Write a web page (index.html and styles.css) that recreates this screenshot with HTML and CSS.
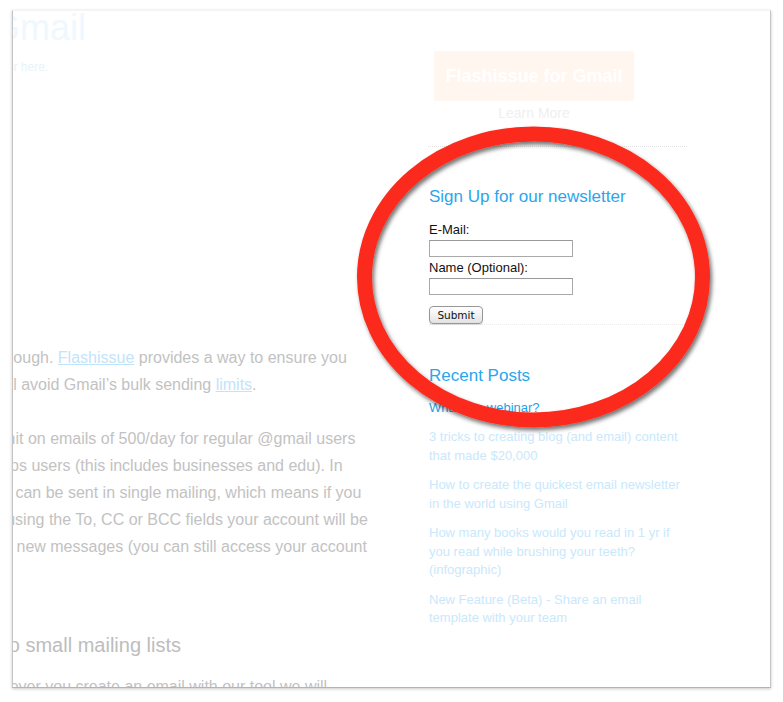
FILE: index.html
```html
<!DOCTYPE html>
<html lang="en">
<head>
<meta charset="utf-8">
<title>Flashissue for Gmail</title>
<link rel="stylesheet" href="styles.css">
</head>
<body>
<div class="frame">
  <main class="main">
    <h1 class="title">Gmail</h1>
    <p class="sub">newsletter here.</p>
    <div class="article">
      <div class="ln ln1">though. <a class="link" href="#">Flashissue</a> provides a way to ensure you</div>
      <div class="ln ln2">will avoid Gmail’s bulk sending <a class="link" href="#">limits</a>.</div>
      <div class="ln ln4">limit on emails of 500/day for regular @gmail users</div>
      <div class="ln ln5">Apps users (this includes businesses and edu). In</div>
      <div class="ln ln6">recipients can be sent in single mailing, which means if you</div>
      <div class="ln ln7">using the To, CC or BCC fields your account will be</div>
      <div class="ln ln8">sending new messages (you can still access your account</div>
      <h2 class="section">to small mailing lists</h2>
      <div class="ln ln9">whenever you create an email with our tool we will</div>
    </div>
  </main>
  <aside class="sidebar">
    <div class="promo">
      <a class="promo-btn" href="#">Flashissue for Gmail</a>
      <a class="promo-more" href="#">Learn More</a>
    </div>
    <div class="rule"></div>
    <form class="signup">
      <h3 class="widget-title">Sign Up for our newsletter</h3>
      <label class="field-label" for="email">E-Mail:</label>
      <input class="field" id="email" type="text">
      <label class="field-label field-label-2" for="name">Name (Optional):</label>
      <input class="field" id="name" type="text">
      <button class="submit" type="button">Submit</button>
    </form>
    <h3 class="widget-title recent-title">Recent Posts</h3>
    <ul class="posts">
      <li class="post"><a class="post-link post-active" href="#">What is a webinar?</a></li>
      <li class="post"><a class="post-link" href="#">3 tricks to creating blog (and email) content that made $20,000</a></li>
      <li class="post"><a class="post-link" href="#">How to create the quickest email newsletter in the world using Gmail</a></li>
      <li class="post"><a class="post-link" href="#">How many books would you read in 1 yr if you read while brushing your teeth? (infographic)</a></li>
      <li class="post"><a class="post-link" href="#">New Feature (Beta) - Share an email template with your team</a></li>
    </ul>
  </aside>
</div>
<svg class="annot" width="783" height="702" viewBox="0 0 783 702" aria-hidden="true">
  <defs>
    <filter id="shadow" x="-10%" y="-10%" width="120%" height="120%">
      <feDropShadow dx="2" dy="3" stdDeviation="2" flood-color="#000" flood-opacity="0.55"/>
    </filter>
  </defs>
  <ellipse cx="533.5" cy="277" rx="169" ry="143" fill="none" stroke="#fb2a1e" stroke-width="15" filter="url(#shadow)"/>
</svg>
</body>
</html>
```
FILE: styles.css
```css
* { box-sizing: border-box; }

html, body {
  margin: 0;
  padding: 0;
  background: #fff;
}

body {
  width: 783px;
  height: 702px;
  overflow: hidden;
  font-family: "Liberation Sans", Arial, Helvetica, sans-serif;
  position: relative;
}

.frame {
  margin: 10px 0 0 12px;
  width: 759px;
  height: 678px;
  border-top: 1px solid #f3f3f3;
  border-left: 1px solid #c4c4c4;
  border-right: 1px solid #c4c4c4;
  border-bottom: 1px solid #b4b4b4;
  box-shadow: 0 1px 3px rgba(0, 0, 0, 0.22);
  overflow: hidden;
  display: flex;
  background: #fff;
}

/* ---------- main column ---------- */
.main {
  width: 416px;
  flex: none;
  overflow: hidden;
}

.title {
  margin: 0 0 0 -21px;
  font-size: 36px;
  line-height: 34px;
  font-weight: normal;
  color: #eef8fe;
  white-space: nowrap;
}

.sub {
  margin: 13.5px 0 0 -50.2px;
  font-size: 12px;
  line-height: 16px;
  color: #e6f4fd;
  white-space: nowrap;
}

.article {
  margin-top: 269.5px;
  font-size: 16px;
  color: #c2c2c2;
}

.ln {
  line-height: 27px;
  white-space: nowrap;
}

.link {
  color: #c2e4fa;
  text-decoration: underline;
}

.ln1 { margin-left: -13px; }
.ln2 { margin-left: -18.5px; }
.ln4 { margin-left: -18px; margin-top: 27px; }
.ln5 { margin-left: -22.5px; }
.ln6 { margin-left: -70.5px; }
.ln7 { margin-left: -6.8px; }
.ln8 { margin-left: -57px; }
.ln9 { margin-left: -41.6px; margin-top: 16.2px; }

.section {
  margin: 72.8px 0 0 -9.8px;
  font-size: 20px;
  line-height: 24px;
  font-weight: normal;
  color: #bdbdbd;
  white-space: nowrap;
}

/* ---------- sidebar ---------- */
.sidebar {
  margin-left: 0;
  width: 258px;
  flex: none;
}

.promo {
  margin: 40px 0 0 5px;
  width: 200px;
  display: flex;
  flex-direction: column;
  align-items: center;
}

.promo-btn {
  width: 200px;
  height: 50px;
  display: flex;
  align-items: center;
  justify-content: center;
  background: #fff6f0;
  border-radius: 2px;
  color: #fff;
  font-weight: bold;
  font-size: 18px;
  text-decoration: none;
}

.promo-more {
  margin-top: 3.2px;
  font-size: 14px;
  line-height: 18px;
  color: #efefef;
  text-decoration: none;
}

.rule {
  margin: 23.8px 0 0 -1px;
  border-top: 1px dotted #e2e2e2;
}

.signup {
  margin: 0;
  display: flex;
  flex-direction: column;
  align-items: flex-start;
  border-bottom: 1px dotted #ececec;
}

.widget-title {
  margin: 39.6px 0 0;
  font-size: 17px;
  line-height: 20px;
  font-weight: normal;
  color: #2aa6ed;
}

.field-label {
  margin-top: 15.9px;
  font-size: 13px;
  line-height: 15px;
  color: #111;
}

.field-label-2 { margin-top: 3.5px; }

.field {
  margin: 2.5px 0 0;
  width: 144px;
  height: 17px;
  padding: 0 2px;
  border: 1px solid #a9a9a9;
  border-top-color: #999;
  background: #fff;
  font-size: 12px;
}

.submit {
  margin-top: 11px;
  width: 54px;
  height: 18px;
  padding: 0;
  border: 1px solid #979797;
  border-radius: 4px;
  background: linear-gradient(#ffffff, #f1f1f1 50%, #e2e2e2);
  box-shadow: 0 1px 1px rgba(0, 0, 0, 0.12);
  font-family: "DejaVu Sans", "Liberation Sans", sans-serif;
  font-size: 10.5px;
  line-height: 16px;
  color: #111;
}

.recent-title { margin-top: 41px; }

.posts {
  list-style: none;
  margin: 13px 0 0;
  padding: 0;
}

.post {
  font-size: 13px;
  line-height: 18.7px;
  margin-bottom: 10.5px;
}

.post-link {
  color: #c9e8fc;
  text-decoration: none;
}

.post-active { color: #1f9fe9; }

/* ---------- annotation ---------- */
.annot {
  position: absolute;
  left: 0;
  top: 0;
  pointer-events: none;
}
```
